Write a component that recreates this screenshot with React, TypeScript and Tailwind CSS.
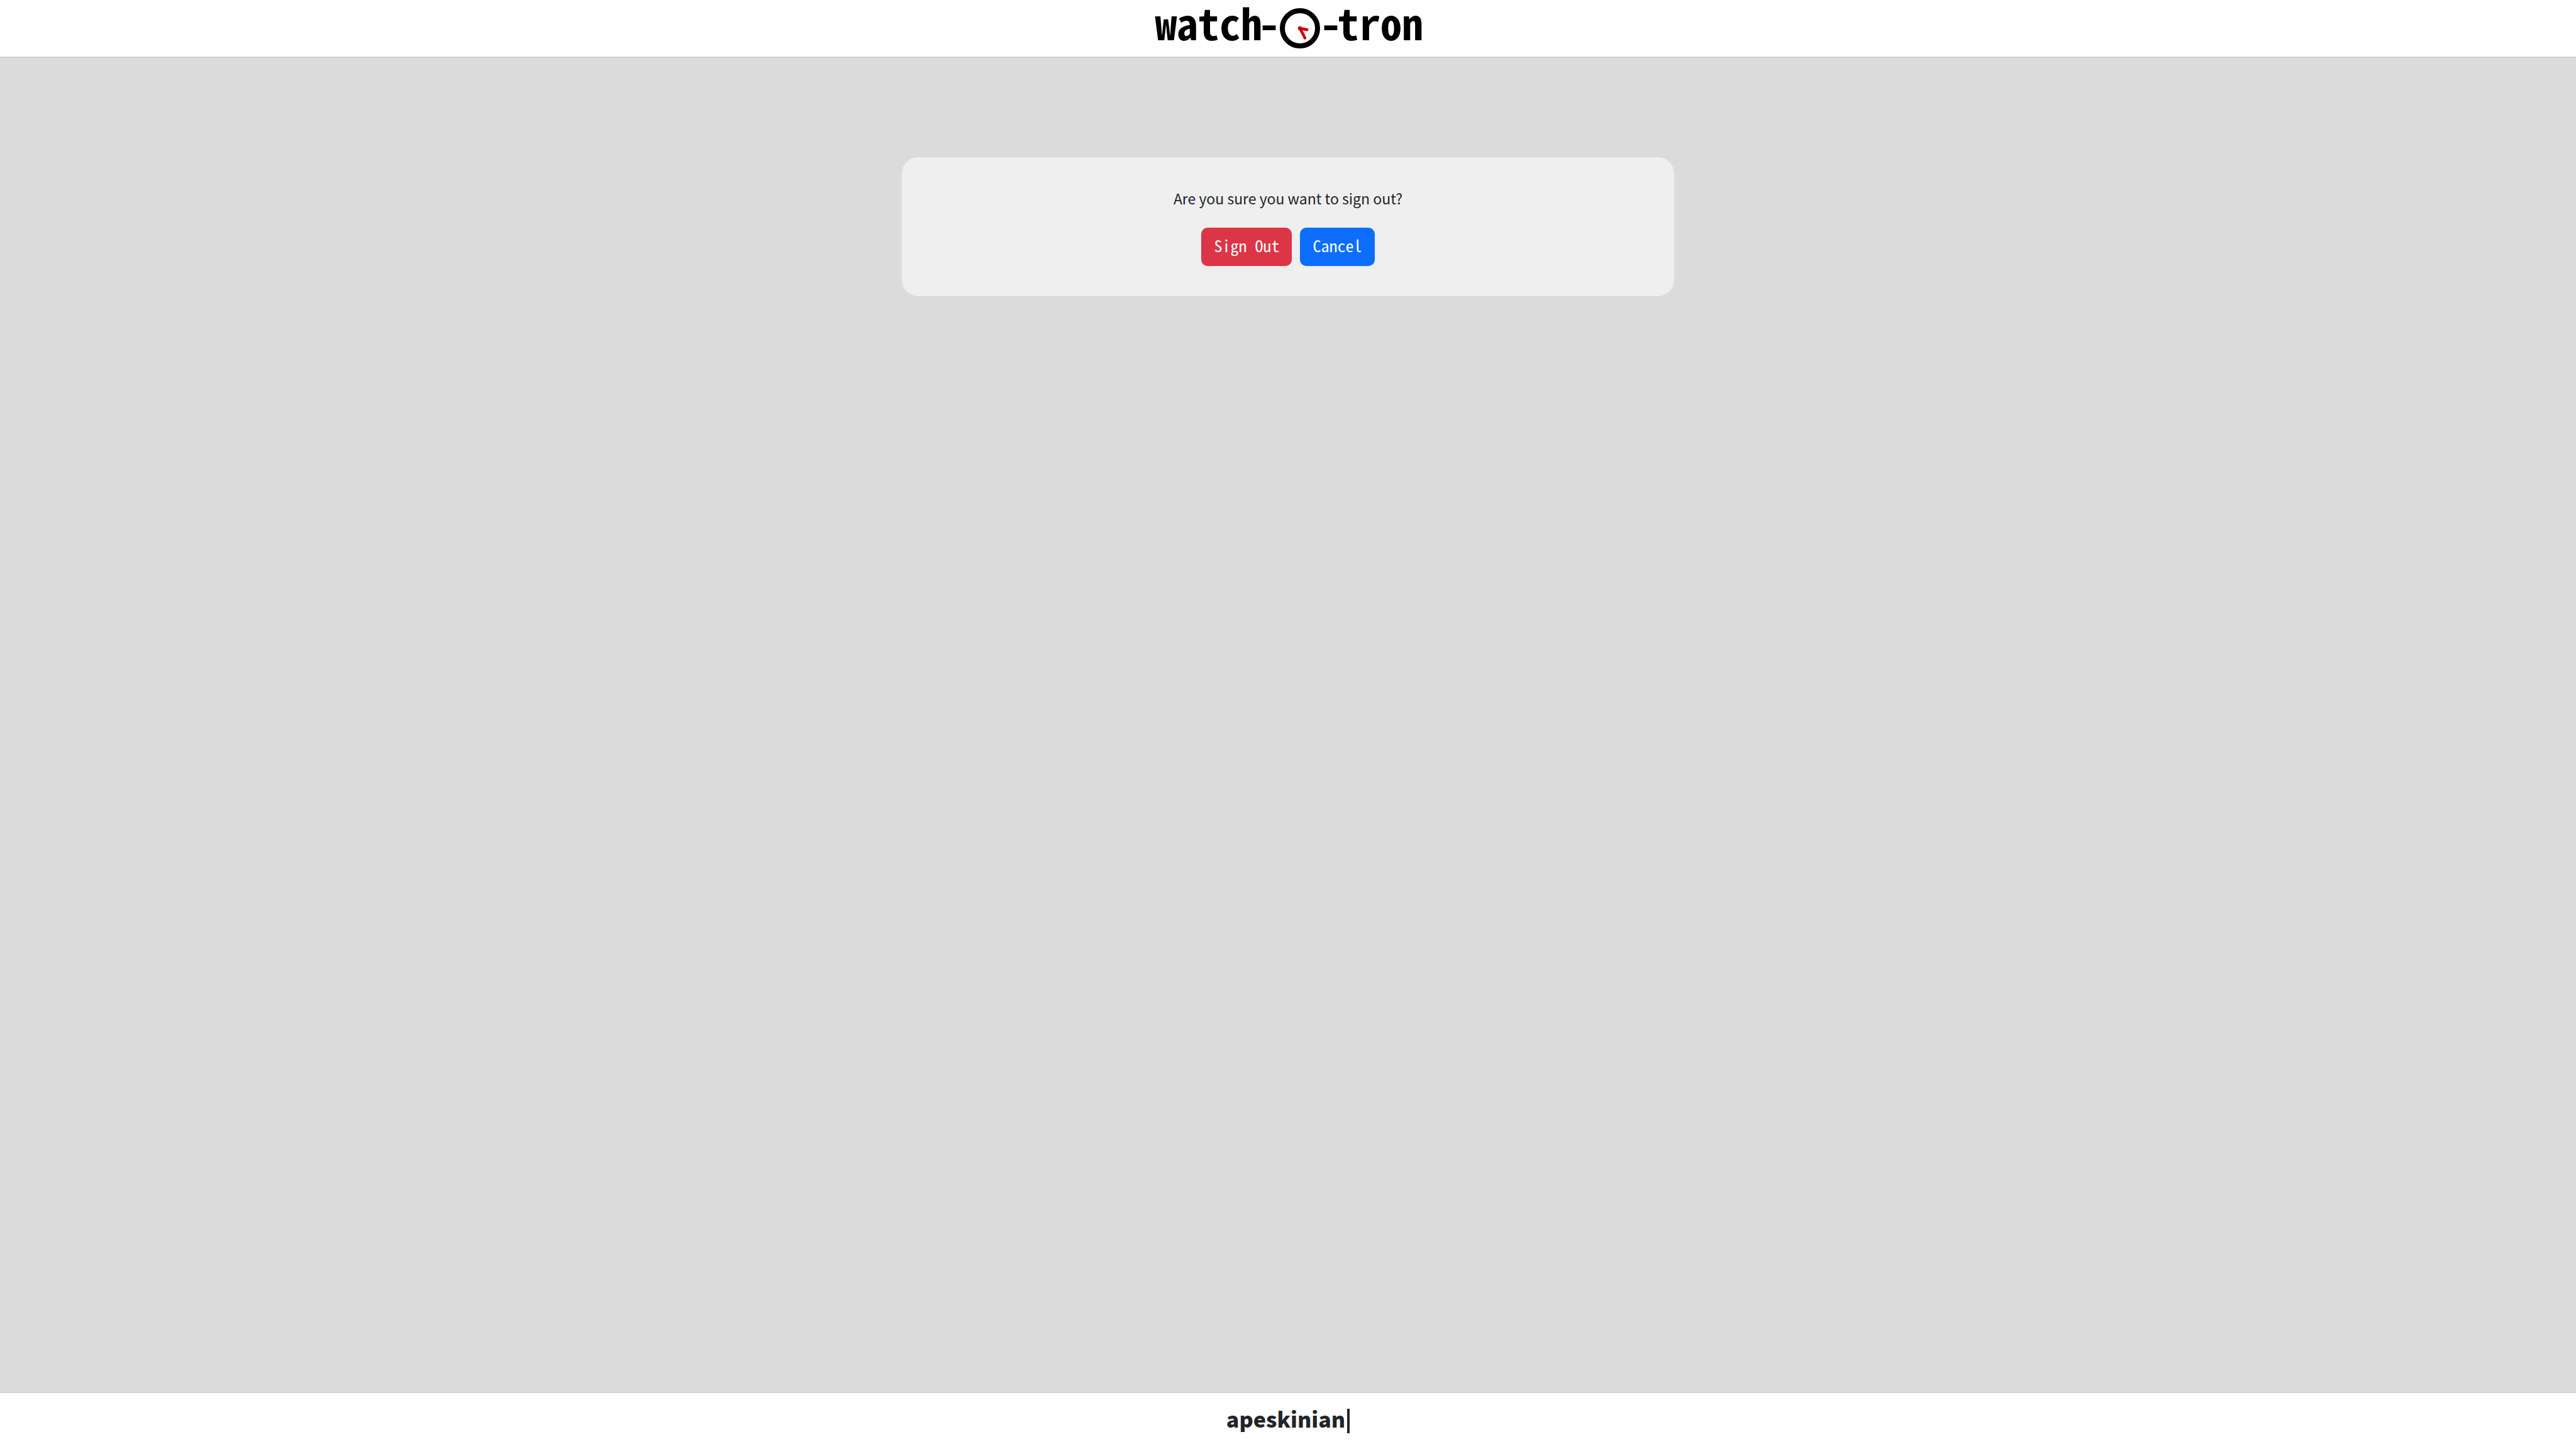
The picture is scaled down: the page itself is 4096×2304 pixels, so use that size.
function ClockLogo() {
  return (
    <svg viewBox="0 0 80 80" className="size-16 shrink-0" aria-hidden="true">
      <circle cx="40" cy="40" r="35" fill="none" stroke="#000" strokeWidth="10" />
      <g stroke="#cc0000" strokeWidth="5.5" strokeLinecap="round">
        <path d="M40 40L54.2 42.8" />
        <path d="M40 40L50 59.4" />
      </g>
      <circle cx="40" cy="40" r="4" fill="#cc0000" />
    </svg>
  );
}

const mono = "font-['Noto_Sans_Mono_CJK_JP','Noto_Sans_Mono_CJK_SC','Liberation_Mono',monospace]";
const button = `${mono} rounded-[10px] px-5 pt-2 pb-[14px] text-[26px] leading-[39px] font-medium text-white`;

export default function App() {
  return (
    <div className="flex min-h-screen flex-col bg-[#dbdbdb] font-['Noto_Sans_CJK_SC',sans-serif] text-[#212529]">
      <header className="flex h-[92px] items-center justify-center border-b-2 border-[#d3d3d3] bg-white">
        <a href="#" aria-label="watch-O-tron" className={`${mono} flex items-center pl-1 text-[68px] leading-[70px] font-bold text-black`}>
          <span className="pb-5">watch</span>
          <span className="-ml-1.5 pb-5">-</span>
          <ClockLogo />
          <span className="pb-5">-</span>
          <span className="-ml-1.5 pb-5">tron</span>
        </a>
      </header>
      <main className="flex grow flex-col items-center pt-[158px]">
        <section className="flex w-[30%] flex-col items-center gap-[30px] rounded-[26px] bg-[#efefef] py-12">
          <p className="text-[23px] leading-[34px]">Are you sure you want to sign out?</p>
          <div className="flex gap-[13px]">
            <button type="button" className={`${button} bg-[#dc3545]`}>
              Sign Out
            </button>
            <button type="button" className={`${button} bg-[#0d6efd]`}>
              Cancel
            </button>
          </div>
        </section>
      </main>
      <footer className="flex h-[91px] items-center justify-center gap-[3px] border-t-2 border-[#d3d3d3] bg-white text-[34px] leading-[50px] font-black">
        <span className="pb-2">apeskinian</span>
        <span className="h-[39px] w-1 bg-[#212529]" />
      </footer>
    </div>
  );
}
